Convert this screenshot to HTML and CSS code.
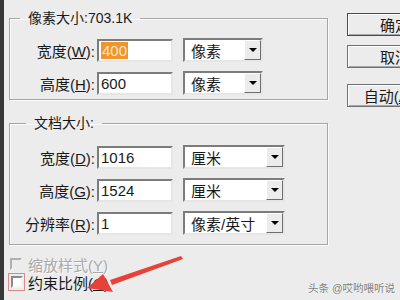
FILE: index.html
```html
<!DOCTYPE html>
<html lang="zh">
<head>
    <meta charset="UTF-8">
    <title>图像大小</title>
    <link rel="stylesheet" href="styles.css">
</head>
<body>
    <div class="dialog">
        <div class="main">
            <fieldset class="group group-pixel">
                <legend>像素大小:703.1K</legend>
                <div class="row">
                    <label>宽度(<u>W</u>):</label>
                    <div class="field"><span class="selected">400</span></div>
                    <div class="combo combo-short"><span>像素</span><span class="drop"></span></div>
                </div>
                <div class="row">
                    <label>高度(<u>H</u>):</label>
                    <div class="field">600</div>
                    <div class="combo combo-short"><span>像素</span><span class="drop"></span></div>
                </div>
            </fieldset>

            <fieldset class="group group-doc">
                <legend>文档大小:</legend>
                <div class="row">
                    <label>宽度(<u>D</u>):</label>
                    <div class="field">1016</div>
                    <div class="combo"><span>厘米</span><span class="drop"></span></div>
                </div>
                <div class="row">
                    <label>高度(<u>G</u>):</label>
                    <div class="field">1524</div>
                    <div class="combo"><span>厘米</span><span class="drop"></span></div>
                </div>
                <div class="row">
                    <label>分辨率(<u>R</u>):</label>
                    <div class="field">1</div>
                    <div class="combo"><span>像素/英寸</span><span class="drop"></span></div>
                </div>
            </fieldset>

            <div class="check disabled">
                <span class="box"></span>
                <span>缩放样式(<u>Y</u>)</span>
            </div>
            <div class="check">
                <span class="mark"><span class="box"></span></span>
                <span>约束比例(<u>C</u>)</span>
            </div>
        </div>

        <div class="buttons">
            <button class="default">确定</button>
            <button>取消</button>
            <button class="auto">自动(<u>A</u>)...</button>
        </div>
    </div>

    <!-- 标注箭头 -->
    <svg class="arrow" width="400" height="300" viewBox="0 0 400 300">
        <polygon points="181,256 183,259 112,285 110,280" fill="#e8413a"/>
        <polygon points="103,274 113,292 87,288" fill="#e8413a"/>
    </svg>

    <div class="watermark">头条 @哎哟喂听说</div>
</body>
</html>
```

FILE: styles.css
```css
body {
    margin: 0;
    width: 400px;
    height: 300px;
    overflow: hidden;
    position: relative;
    background-color: #ececec;
    font-family: "Liberation Sans", "Noto Sans CJK SC", sans-serif;
    font-size: 15px;
    color: #1a1a1a;
}
.dialog {
    display: flex;
    height: 300px;
    border-left: 4px solid #383838;
}
.main {
    width: 326px;
    flex-shrink: 0;
    padding-top: 8px;
}
.group {
    margin: 0 0 0 5px;
    padding: 10px 0 4px 0;
    border: 1px solid #a6a6a6;
    box-shadow: inset 1px 1px #fbfbfb, 1px 1px #fbfbfb;
    width: 319px;
    box-sizing: border-box;
}
.group legend {
    padding: 0 8px;
    margin-left: 10px;
    line-height: 20px;
    font-size: 14px;
}
.group-doc {
    margin-top: 13px;
    padding: 12px 0 9px 0;
}
.group-doc legend {
    margin-left: 16px;
}
.row {
    display: flex;
    align-items: center;
    height: 24px;
    margin-bottom: 9px;
}
.row:last-child {
    margin-bottom: 0;
}
.row label {
    width: 85px;
    padding-right: 2px;
    text-align: right;
}
.field {
    width: 76px;
    height: 23px;
    box-sizing: border-box;
    background-color: #fff;
    border: 2px solid;
    border-color: #7c7c7c #e6e6e6 #e6e6e6 #7c7c7c;
    padding-left: 2px;
    line-height: 19px;
    white-space: nowrap;
}
.selected {
    background-color: #f0952c;
    color: #fbe6cc;
    padding: 0 1px;
}
.combo {
    display: flex;
    align-items: center;
    justify-content: space-between;
    width: 102px;
    height: 24px;
    box-sizing: border-box;
    margin-left: 10px;
    background-color: #fff;
    border: 2px solid;
    border-color: #7c7c7c #e6e6e6 #e6e6e6 #7c7c7c;
    padding-left: 6px;
}
.combo-short {
    width: 80px;
}
.drop {
    width: 17px;
    height: 20px;
    box-sizing: border-box;
    background-color: #ececec;
    border: 1px solid;
    border-color: #fff #6e6e6e #6e6e6e #fff;
    position: relative;
}
.drop::after {
    content: "";
    position: absolute;
    left: 4px;
    top: 7px;
    border-left: 4px solid transparent;
    border-right: 4px solid transparent;
    border-top: 4px solid #000;
}
.check {
    display: flex;
    align-items: center;
    height: 18px;
    margin-left: 6px;
}
.check.disabled {
    margin-top: 10px;
    color: #a9a9a9;
    text-shadow: 1px 1px #fbfbfb;
}
.box {
    width: 12px;
    height: 12px;
    box-sizing: border-box;
    border: 2px solid;
    border-color: #8a8a8a #f4f4f4 #f4f4f4 #8a8a8a;
    background-color: #fff;
    margin-right: 6px;
}
.disabled .box {
    background-color: #ececec;
    border-color: #b0b0b0 #ececec #ececec #b0b0b0;
}
.mark {
    width: 17px;
    height: 18px;
    box-sizing: border-box;
    border: 1px solid #d98a8a;
    display: flex;
    align-items: center;
    justify-content: center;
    margin-left: -2px;
    margin-right: 3px;
}
.mark .box {
    margin: 0;
}
.buttons {
    display: flex;
    flex-direction: column;
    margin-left: 17px;
    padding-top: 13px;
    flex-shrink: 0;
}
button {
    width: 96px;
    height: 23px;
    margin-bottom: 9px;
    background-color: #ececec;
    border: 1px solid #707070;
    box-shadow: inset 1px 1px #fff, inset -1px -1px #a8a8a8;
    font-family: inherit;
    font-size: 15px;
    color: #1a1a1a;
    padding: 0;
}
button.default {
    border-color: #4a4a4a;
}
button.auto {
    margin-top: 7px;
}
.arrow {
    position: absolute;
    left: 0;
    top: 0;
    pointer-events: none;
}
.watermark {
    position: absolute;
    left: 308px;
    top: 280px;
    font-size: 10.5px;
    color: #7d7d7d;
    text-shadow: 0 0 2px #fff;
}
```
